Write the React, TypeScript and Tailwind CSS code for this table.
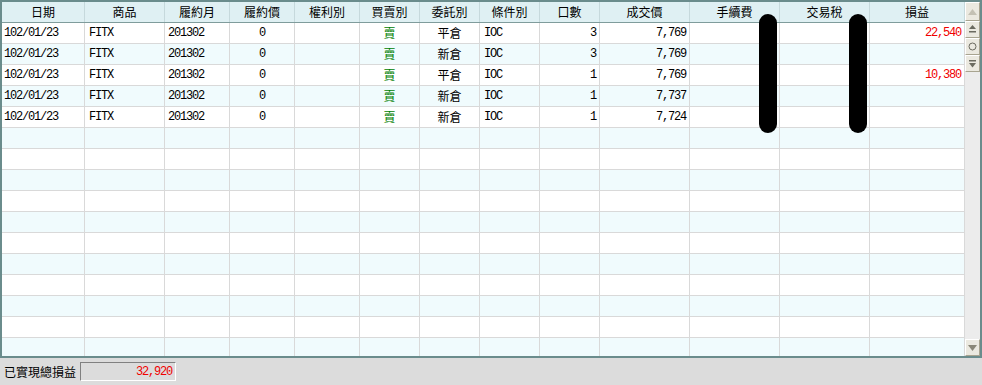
import { ReactNode } from 'react';

interface Column {
    title: string;
    width: string;
    align: string;
}

const columns: Column[] = [
    { title: '日期', width: 'w-[83px]', align: 'justify-start pl-[2px]' },
    { title: '商品', width: 'w-[80px]', align: 'justify-start pl-[4px]' },
    { title: '履約月', width: 'w-[65px]', align: 'justify-start pl-[3px]' },
    { title: '履約價', width: 'w-[65px]', align: 'justify-center' },
    { title: '權利別', width: 'w-[65px]', align: 'justify-center' },
    { title: '買賣別', width: 'w-[60px]', align: 'justify-center' },
    { title: '委託別', width: 'w-[60px]', align: 'justify-center' },
    { title: '條件別', width: 'w-[60px]', align: 'justify-start pl-[4px]' },
    { title: '口數', width: 'w-[60px]', align: 'justify-end pr-[3px]' },
    { title: '成交價', width: 'w-[90px]', align: 'justify-end pr-[3px]' },
    { title: '手續費', width: 'w-[90px]', align: 'justify-end pr-[3px]' },
    { title: '交易稅', width: 'w-[90px]', align: 'justify-end pr-[3px]' },
    { title: '損益', width: 'w-[95px]', align: 'justify-end pr-[3px]' },
];

const trades = [
    ['102/01/23', 'FITX', '201302', '0', '', '賣', '平倉', 'IOC', '3', '7,769', '', '', '22,540'],
    ['102/01/23', 'FITX', '201302', '0', '', '賣', '新倉', 'IOC', '3', '7,769', '', '', ''],
    ['102/01/23', 'FITX', '201302', '0', '', '賣', '平倉', 'IOC', '1', '7,769', '', '', '10,380'],
    ['102/01/23', 'FITX', '201302', '0', '', '賣', '新倉', 'IOC', '1', '7,737', '', '', ''],
    ['102/01/23', 'FITX', '201302', '0', '', '賣', '新倉', 'IOC', '1', '7,724', '', '', ''],
];

const mono = "font-['Liberation_Mono','Noto_Sans_CJK_TC',monospace] text-[12px] tracking-[-1.2px]";
const cjk = "font-['Noto_Sans_CJK_TC',sans-serif] text-[12px]";

function cellText(value: string, col: number): ReactNode {
    if (col === 5) return <span className={`${cjk} text-[#008000]`}>{value}</span>;
    if (col === 6) return <span className={cjk}>{value}</span>;
    if (col === 12) return <span className={`${mono} text-[#f00000]`}>{value}</span>;
    return <span className={mono}>{value}</span>;
}

function ScrollButton({ children, className }: { children: ReactNode; className?: string }) {
    return (
        <div
            className={`flex h-[17px] w-[15px] items-center justify-center border border-t-white border-l-white border-r-[#a8a490] border-b-[#a8a490] bg-[#ebe9e0] ${className ?? ''}`}
        >
            {children}
        </div>
    );
}

export default function App() {
    const rows = Array.from({ length: 16 }, (_, i) => trades[i] ?? Array(13).fill(''));

    return (
        <div className="flex h-[385px] w-[982px] flex-col bg-[#dcdcdc] text-black">
            <div className="relative flex h-[358px] border-2 border-[#6a8c8c]">
                <div className="flex flex-1 flex-col overflow-hidden">
                    <div className="flex h-[21px] shrink-0 border-b border-[#7f9c9c] bg-[#dff0f3]">
                        {columns.map((c) => (
                            <div
                                key={c.title}
                                className={`${c.width} flex shrink-0 items-center justify-center border-r border-[#c6d9dc] ${cjk}`}
                            >
                                {c.title}
                            </div>
                        ))}
                    </div>
                    {rows.map((row, r) => (
                        <div
                            key={r}
                            className={`flex h-[21px] shrink-0 border-b border-[#d9d9d9] ${r % 2 === 1 ? 'bg-[#f0fbfd]' : 'bg-white'}`}
                        >
                            {columns.map((c, ci) => (
                                <div
                                    key={ci}
                                    className={`${c.width} flex shrink-0 items-center border-r border-[#d9d9d9] ${c.align}`}
                                >
                                    {row[ci] && cellText(row[ci], ci)}
                                </div>
                            ))}
                        </div>
                    ))}
                </div>
                <div className="flex w-[15px] shrink-0 flex-col justify-between bg-[#ececec]">
                    <div className="flex flex-col">
                        <ScrollButton className="h-[19px]">
                            <svg width="9" height="6" viewBox="0 0 9 6">
                                <path d="M4.5 0 L9 6 L0 6 Z" fill="#c4c1b4" />
                            </svg>
                        </ScrollButton>
                        <ScrollButton>
                            <svg width="9" height="9" viewBox="0 0 9 9">
                                <path d="M4.5 0 L8 4 L1 4 Z" fill="#6b6b60" />
                                <rect x="1" y="6" width="7" height="1.5" fill="#6b6b60" />
                            </svg>
                        </ScrollButton>
                        <ScrollButton>
                            <svg width="9" height="9" viewBox="0 0 9 9">
                                <circle cx="4.5" cy="4.5" r="3.5" fill="none" stroke="#6b6b60" strokeWidth="1" />
                            </svg>
                        </ScrollButton>
                        <ScrollButton>
                            <svg width="9" height="9" viewBox="0 0 9 9">
                                <rect x="1" y="1" width="7" height="1.5" fill="#6b6b60" />
                                <path d="M1 4 L8 4 L4.5 8.5 Z" fill="#6b6b60" />
                            </svg>
                        </ScrollButton>
                    </div>
                    <ScrollButton className="h-[14px]">
                        <svg width="9" height="6" viewBox="0 0 9 6">
                            <path d="M0 0 L9 0 L4.5 6 Z" fill="#8a8778" />
                        </svg>
                    </ScrollButton>
                </div>
                <div className="absolute top-[12px] left-[757px] h-[119px] w-[18px] rounded-full bg-black" />
                <div className="absolute top-[12px] left-[847px] h-[119px] w-[18px] rounded-full bg-black" />
            </div>
            <div className="flex h-[27px] items-center gap-[4px] pl-[4px]">
                <span className={`${cjk} leading-none`}>已實現總損益</span>
                <div className="flex h-[19px] w-[96px] items-center justify-end border border-t-[#808080] border-l-[#808080] border-r-white border-b-white bg-[#dcdcdc] pr-[3px]">
                    <span className={`${mono} text-[#f00000]`}>32,920</span>
                </div>
            </div>
        </div>
    );
}
